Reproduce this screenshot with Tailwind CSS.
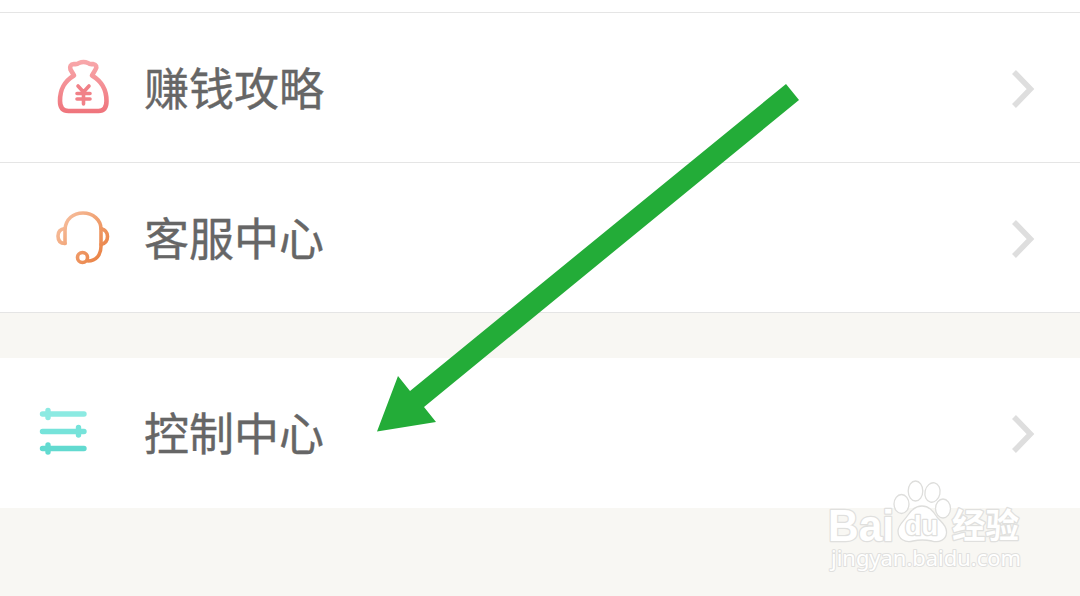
<!doctype html>
<html lang="zh-CN">

  <head>
    <meta charset="UTF-8" />
    <meta name="viewport" content="width=device-width, initial-scale=1.0" />
    <title>控制中心</title>
    <script src="https://cdn.jsdelivr.net/npm/@tailwindcss/browser@4"></script>
  </head>

  <body class="bg-[#f8f7f3]">
    <div class="relative w-full h-[596px] overflow-hidden antialiased font-['Noto_Sans_CJK_SC',sans-serif] text-[45px] leading-none text-[#666] [-webkit-text-stroke:0.4px_#666]">

      <!-- Bottom of the previous row -->
      <div class="h-[13px] bg-white border-b border-[#e5e5e5]"></div>

      <!-- Menu -->
      <a class="flex items-center h-[150px] bg-white border-b border-[#e5e5e5] pl-[30px] pr-[40px]">
        <svg class="w-[100px] h-[90px]" viewBox="30 43 100 90" fill="none" stroke="url(#red)" stroke-width="4.6" stroke-linecap="round" stroke-linejoin="round">
          <defs>
            <linearGradient id="red" gradientUnits="userSpaceOnUse" x1="0" y1="60" x2="0" y2="113">
              <stop offset="0" stop-color="#f8a8ab" />
              <stop offset="1" stop-color="#ef747c" />
            </linearGradient>
          </defs>
          <path d="M74 75.500L70.500 69.500Q69 64.500 74 64Q77 64.500 79 63Q83.500 61 88 63Q90 64.500 93 64Q98 65 95.500 69.500L92 75.500C101 81 106.500 88 106.500 101Q106.500 111 98.500 111H68.500Q60 111 60 101C60 88 65 81 74 75.500Z" />
          <path stroke="#f18188" stroke-width="3.600" d="M78 86L83.500 92L89 86M83.500 92V104M77 93.500H90M77 99H90" />
        </svg>
        <span class="ml-[14px] pb-[2px]">赚钱攻略</span>
        <svg class="ml-auto w-[36px] h-[44px]" viewBox="1004 66 36 44" fill="none" stroke="#dedede" stroke-width="5.5">
          <path d="M1014 72L1030.500 89L1014 106" />
        </svg>
      </a>

      <a class="flex items-center h-[150px] bg-white border-b border-[#e5e5e5] pl-[30px] pr-[40px]">
        <svg class="w-[100px] h-[90px]" viewBox="30 193 100 90" fill="none" stroke="url(#orange)" stroke-width="3.600" stroke-linecap="round" stroke-linejoin="round">
          <defs>
            <linearGradient id="orange" gradientUnits="userSpaceOnUse" x1="58" y1="220" x2="104" y2="260">
              <stop offset="0" stop-color="#f7c0a0" />
              <stop offset="1" stop-color="#e97f40" />
            </linearGradient>
          </defs>
          <path d="M65 243.500V229C66 219 73 213 83 213C93 213 101 220 101 229V246C101 255 96 261 88 261" />
          <path d="M65 228.500C60 229 58 232 58 236C58 241 60 243.500 65 243.500M101 228.500C106 230 107.500 233 107.500 236.500C107.500 241 105 243.500 101 244.500" />
          <circle cx="82.500" cy="257.500" r="5" />
        </svg>
        <span class="ml-[14px] pb-[2px]">客服中心</span>
        <svg class="ml-auto w-[36px] h-[44px]" viewBox="1004 66 36 44" fill="none" stroke="#dedede" stroke-width="5.5">
          <path d="M1014 72L1030.500 89L1014 106" />
        </svg>
      </a>

      <a class="mt-[45px] flex items-center h-[150px] bg-white pl-[30px] pr-[40px]">
        <svg class="w-[100px] h-[90px]" viewBox="30 388 100 90" fill="none" stroke-width="5.400" stroke-linecap="round">
          <path stroke="#8ceae2" d="M42.500 414H84M48 410.500V417.500" />
          <path stroke="#76e3da" d="M42.500 431.500H84M78.500 427.500V435" />
          <path stroke="#62dad0" d="M42.500 448.500H84M48 445V452" />
        </svg>
        <span class="ml-[14px] pb-[4px]">控制中心</span>
        <svg class="ml-auto w-[36px] h-[44px]" viewBox="1004 66 36 44" fill="none" stroke="#dedede" stroke-width="5.5">
          <path d="M1014 72L1030.500 89L1014 106" />
        </svg>
      </a>

      <!-- Arrow and watermark over the menu -->
      <svg class="absolute inset-0 w-[1080px] h-[596px] [-webkit-text-stroke:0]" viewBox="0 0 1080 596">
        <path fill="#23ac38" d="M786 84L799 100L424 407L436 422L377 431.500L398 376L410 391Z" />

        <g fill="#fff" stroke="#dededc" stroke-width="1.300">
          <ellipse cx="901.500" cy="504" rx="7.500" ry="9.500" />
          <ellipse cx="915.500" cy="491" rx="7.300" ry="10" />
          <ellipse cx="932.500" cy="492.500" rx="7.500" ry="9.800" transform="rotate(12 932.500 492.500)" />
          <ellipse cx="943" cy="508.500" rx="7.500" ry="9.500" />
          <path d="M922 506C929 506 933 511 937 517C942 523 947 526 946.500 533C946 540 939 543 932 541Q922 539 913 541C905 543 898 539 898 531C898 525 904 521 908 515C912 509 916 506 922 506Z" />
        </g>

        <g fill="#fff" stroke="#e0e0de" stroke-linejoin="round" paint-order="stroke">
          <text x="828" y="541" stroke-width="2.600" font-family="Liberation Sans, sans-serif" font-size="45" font-weight="700" textLength="66" lengthAdjust="spacingAndGlyphs">Bai</text>
          <text x="905" y="535" stroke-width="2.600" font-family="Liberation Sans, sans-serif" font-size="27" font-weight="700" textLength="33" lengthAdjust="spacingAndGlyphs">du</text>
          <text x="952" y="538" stroke-width="2.600" font-family="Noto Sans CJK SC, sans-serif" font-size="34" font-weight="700" textLength="67" lengthAdjust="spacingAndGlyphs">经验</text>
          <text x="831" y="566" stroke-width="2" font-family="Noto Sans, sans-serif" font-size="22" textLength="190" lengthAdjust="spacingAndGlyphs">jingyan.baidu.com</text>
        </g>
      </svg>

    </div>
  </body>

</html>
